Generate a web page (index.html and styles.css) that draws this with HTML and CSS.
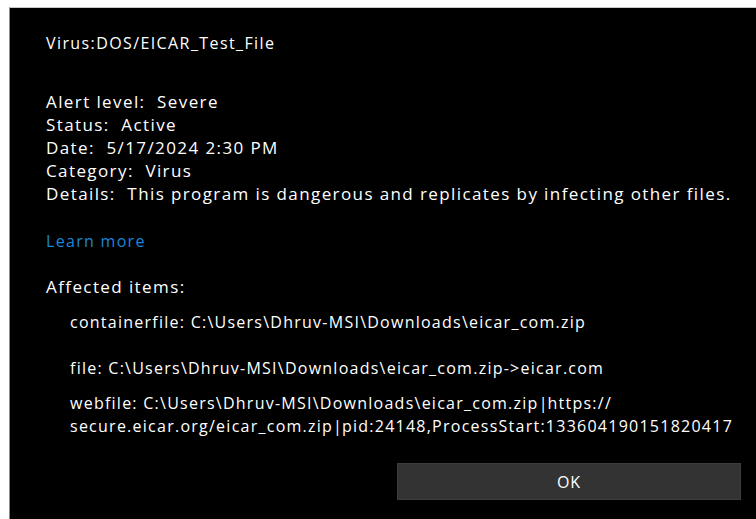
FILE: index.html
```html
<!DOCTYPE html>
<html lang="en">
<head>
<meta charset="utf-8">
<title>Threat details</title>
<link rel="stylesheet" href="styles.css">
</head>
<body>
<div class="dialog">
  <div class="content">
    <div class="title">Virus:DOS/EICAR_Test_File</div>
    <div class="facts">
      <div>Alert level:&nbsp; Severe</div>
      <div>Status:&nbsp; Active</div>
      <div>Date:&nbsp; 5/17/2024 2:30 PM</div>
      <div>Category:&nbsp; Virus</div>
      <div>Details:&nbsp; This program is dangerous and replicates by infecting other files.</div>
    </div>
    <a class="link" href="#">Learn more</a>
    <div class="affected">Affected items:</div>
    <ul class="items">
      <li class="gap-wide">containerfile: C:\Users\Dhruv-MSI\Downloads\eicar_com.zip</li>
      <li class="gap-narrow">file: C:\Users\Dhruv-MSI\Downloads\eicar_com.zip-&gt;eicar.com</li>
      <li>webfile: C:\Users\Dhruv-MSI\Downloads\eicar_com.zip<span class="pipe">|</span>https://<br>secure.eicar.org/eicar_com.zip<span class="pipe">|</span>pid:24148,ProcessStart:133604190151820417</li>
    </ul>
  </div>
  <div class="actions">
    <button class="ok" type="button">OK</button>
  </div>
</div>
</body>
</html>
```
FILE: styles.css
```css
html, body {
  margin: 0;
  padding: 0;
  height: 100%;
  background: #ffffff;
  overflow: hidden;
}

body {
  padding: 7px 0 0 9px;
  box-sizing: border-box;
  font-family: "Open Sans", "Noto Sans", sans-serif;
  color: #ffffff;
}

.dialog {
  height: 100%;
  background: #000000;
  border-left: 1px solid #8a8a8a;
  border-top: 1px solid #c8c8c8;
  box-sizing: border-box;
  display: flex;
  flex-direction: column;
}

.content {
  padding: 24px 0 0 36px;
}

.title {
  font-size: 16px;
  letter-spacing: 1.4px;
  line-height: 23px;
}

.facts {
  margin-top: 35px;
  font-size: 17px;
  letter-spacing: 1.4px;
  line-height: 23px;
}

.link {
  display: block;
  margin-top: 25px;
  font-size: 16px;
  letter-spacing: 1.3px;
  line-height: 23px;
  color: #1a86d9;
  text-decoration: none;
}

.affected {
  margin-top: 22px;
  font-size: 17px;
  letter-spacing: 1.4px;
  line-height: 23px;
}

.items {
  list-style: none;
  margin: 13px 0 0;
  padding: 0 0 0 24px;
  font-size: 16px;
  letter-spacing: 1.25px;
  line-height: 23px;
}

/* path separators sit tight against their neighbours */
.pipe {
  letter-spacing: 0;
}

.gap-wide {
  margin-bottom: 23px;
}

.gap-narrow {
  margin-bottom: 12px;
}

.actions {
  display: flex;
  justify-content: flex-end;
  padding: 0 15px 0 0;
  margin-top: 25px;
}

.ok {
  width: 344px;
  height: 37px;
  background: #333333;
  border: 1px solid #3d3d3d;
  color: #ffffff;
  font-family: "Open Sans", "Noto Sans", sans-serif;
  font-size: 16px;
  letter-spacing: 1px;
}
```
